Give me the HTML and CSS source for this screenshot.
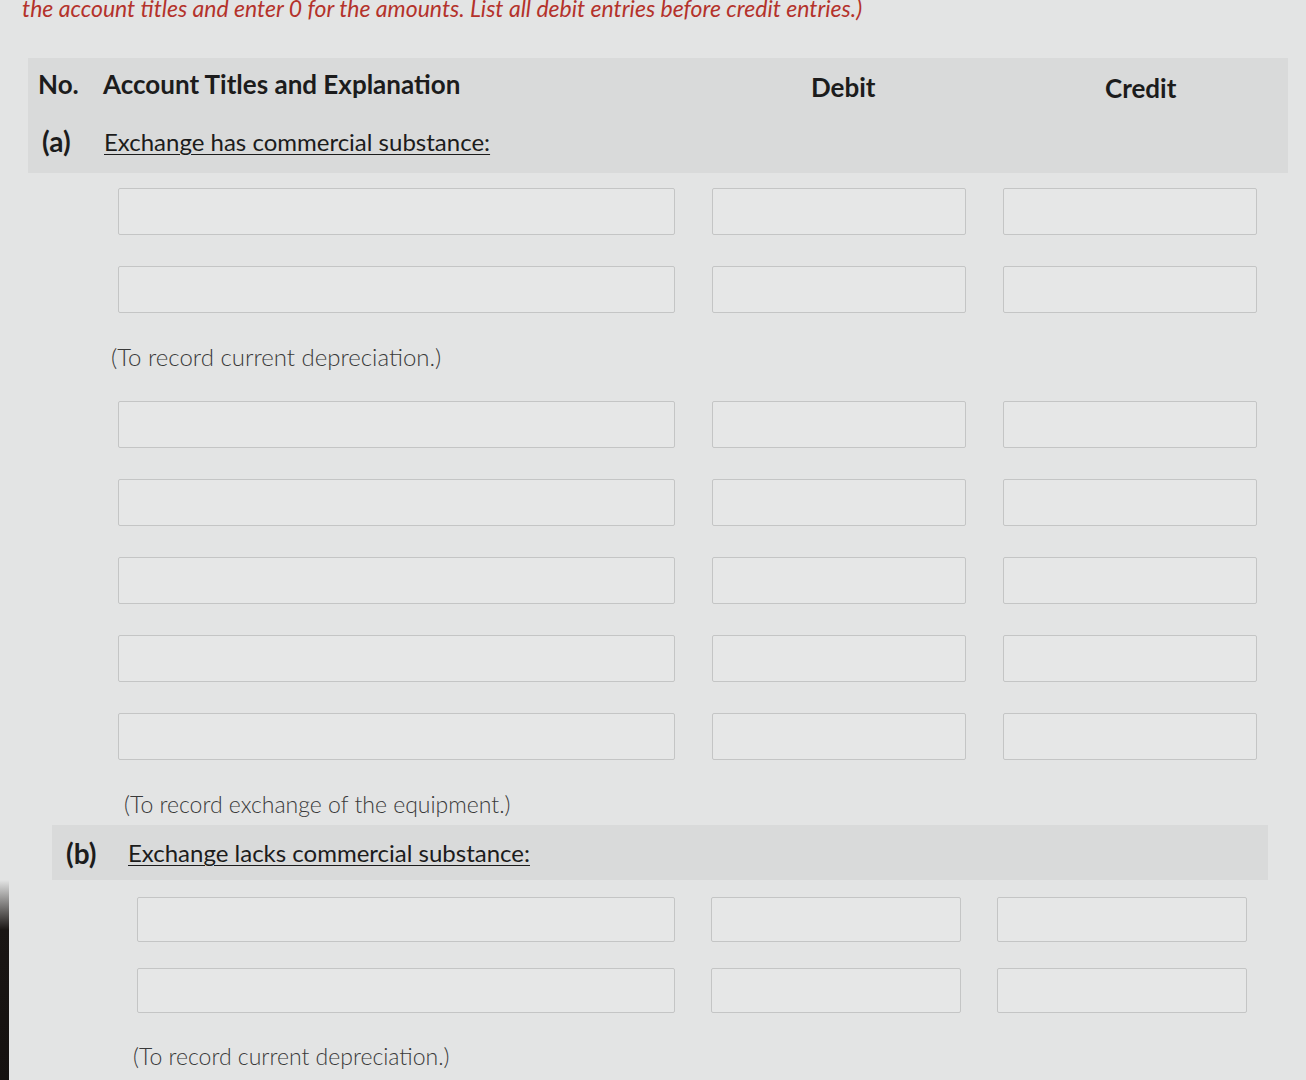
FILE: index.html
```html
<!DOCTYPE html>
<html lang="en">
<head>
<meta charset="utf-8">
<title>Journal entries</title>
<link rel="stylesheet" href="styles.css">
</head>
<body>
<div class="page">
  <p class="instructions">the account titles and enter 0 for the amounts. List all debit entries before credit entries.)</p>

  <div class="band band-head">
    <div class="head-row">
      <span class="col-no">No.</span>
      <span class="col-title">Account Titles and Explanation</span>
      <span class="col-debit">Debit</span>
      <span class="col-credit">Credit</span>
    </div>
    <div class="part-row">
      <span class="part-no">(a)</span>
      <span class="part-title">Exchange has commercial substance:</span>
    </div>
  </div>

  <div class="entries first">
    <div class="entry"><div class="box"></div><div class="box"></div><div class="box"></div></div>
    <div class="entry"><div class="box"></div><div class="box"></div><div class="box"></div></div>
  </div>
  <p class="note">(To record current depreciation.)</p>

  <div class="entries">
    <div class="entry"><div class="box"></div><div class="box"></div><div class="box"></div></div>
    <div class="entry"><div class="box"></div><div class="box"></div><div class="box"></div></div>
    <div class="entry"><div class="box"></div><div class="box"></div><div class="box"></div></div>
    <div class="entry"><div class="box"></div><div class="box"></div><div class="box"></div></div>
    <div class="entry"><div class="box"></div><div class="box"></div><div class="box"></div></div>
  </div>
  <p class="note note-b">(To record exchange of the equipment.)</p>

  <div class="band band-b">
    <div class="part-row">
      <span class="part-no">(b)</span>
      <span class="part-title">Exchange lacks commercial substance:</span>
    </div>
  </div>

  <div class="entries entries-b">
    <div class="entry"><div class="box"></div><div class="box"></div><div class="box"></div></div>
    <div class="entry"><div class="box"></div><div class="box"></div><div class="box"></div></div>
  </div>
  <p class="note note-c">(To record current depreciation.)</p>
</div>
<div class="bezel"></div>
</body>
</html>
```
FILE: styles.css
```css
html, body {
  margin: 0;
  padding: 0;
}
body {
  background: #e3e4e4;
  font-family: "Lato", "Open Sans", sans-serif;
  color: #1c1c1c;
  width: 1306px;
  height: 1080px;
  overflow: hidden;
  position: relative;
}
.page {
  display: flex;
  flex-direction: column;
}
.instructions {
  margin: -5px 0 0 22px;
  height: 26px;
  line-height: 26px;
  font-size: 23px;
  font-style: italic;
  color: #b4322b;
  white-space: nowrap;
}
.band {
  background: #d9dada;
}
.band-head {
  margin: 37px 18px 0 28px;
  height: 115px;
  box-sizing: border-box;
  padding-top: 11px;
}
.head-row {
  display: flex;
  align-items: center;
  height: 30px;
  font-weight: 700;
  font-size: 26px;
}
.col-no {
  margin-left: 10px;
  width: 65px;
}
.col-title {
  width: 600px;
}
.col-debit {
  width: 240px;
  margin-left: 108px;
  margin-top: 6px;
}
.col-credit {
  margin-top: 8px;
  margin-left: 54px;
}
.part-row {
  display: flex;
  align-items: center;
  height: 30px;
  margin-top: 27px;
  font-size: 24px;
}
.part-no {
  margin-left: 14px;
  width: 62px;
  font-weight: 700;
  font-size: 28px;
}
.part-title {
  text-decoration: underline;
  text-underline-offset: 3px;
  text-decoration-thickness: 1px;
  font-weight: 400;
}
.entries {
  display: flex;
  flex-direction: column;
  gap: 31px;
  margin-left: 118px;
}
.entries.first {
  margin-top: 15px;
}
.entries:not(.first) {
  margin-top: 31px;
}
.entry {
  display: grid;
  grid-template-columns: 557px 254px 254px;
  column-gap: 37px;
  height: 47px;
}
.box {
  border: 1px solid #c4c5c5;
  border-radius: 2px;
  background: #e6e7e7;
  box-sizing: border-box;
}
.note {
  margin: 31px 0 0 111px;
  height: 26px;
  line-height: 26px;
  font-size: 24px;
  font-weight: 300;
  color: #3a3a3a;
}
.note-b {
  margin-left: 124px;
  font-size: 23px;
}
.band-b {
  margin: 8px 38px 0 52px;
  height: 55px;
  display: flex;
  align-items: center;
}
.band-b .part-row {
  margin-top: 0;
}
.entries.entries-b {
  margin-top: 17px;
  margin-left: 137px;
  gap: 26px;
}
.entries-b .entry {
  grid-template-columns: 538px 250px 250px;
  column-gap: 36px;
  height: 45px;
}
.note-c {
  margin-left: 133px;
  margin-top: 30px;
  font-size: 23px;
}
.bezel {
  position: absolute;
  left: 0;
  top: 880px;
  width: 9px;
  height: 200px;
  background: linear-gradient(to bottom, rgba(20,16,14,0), #1a1614 25%, #15110f);
}
```
